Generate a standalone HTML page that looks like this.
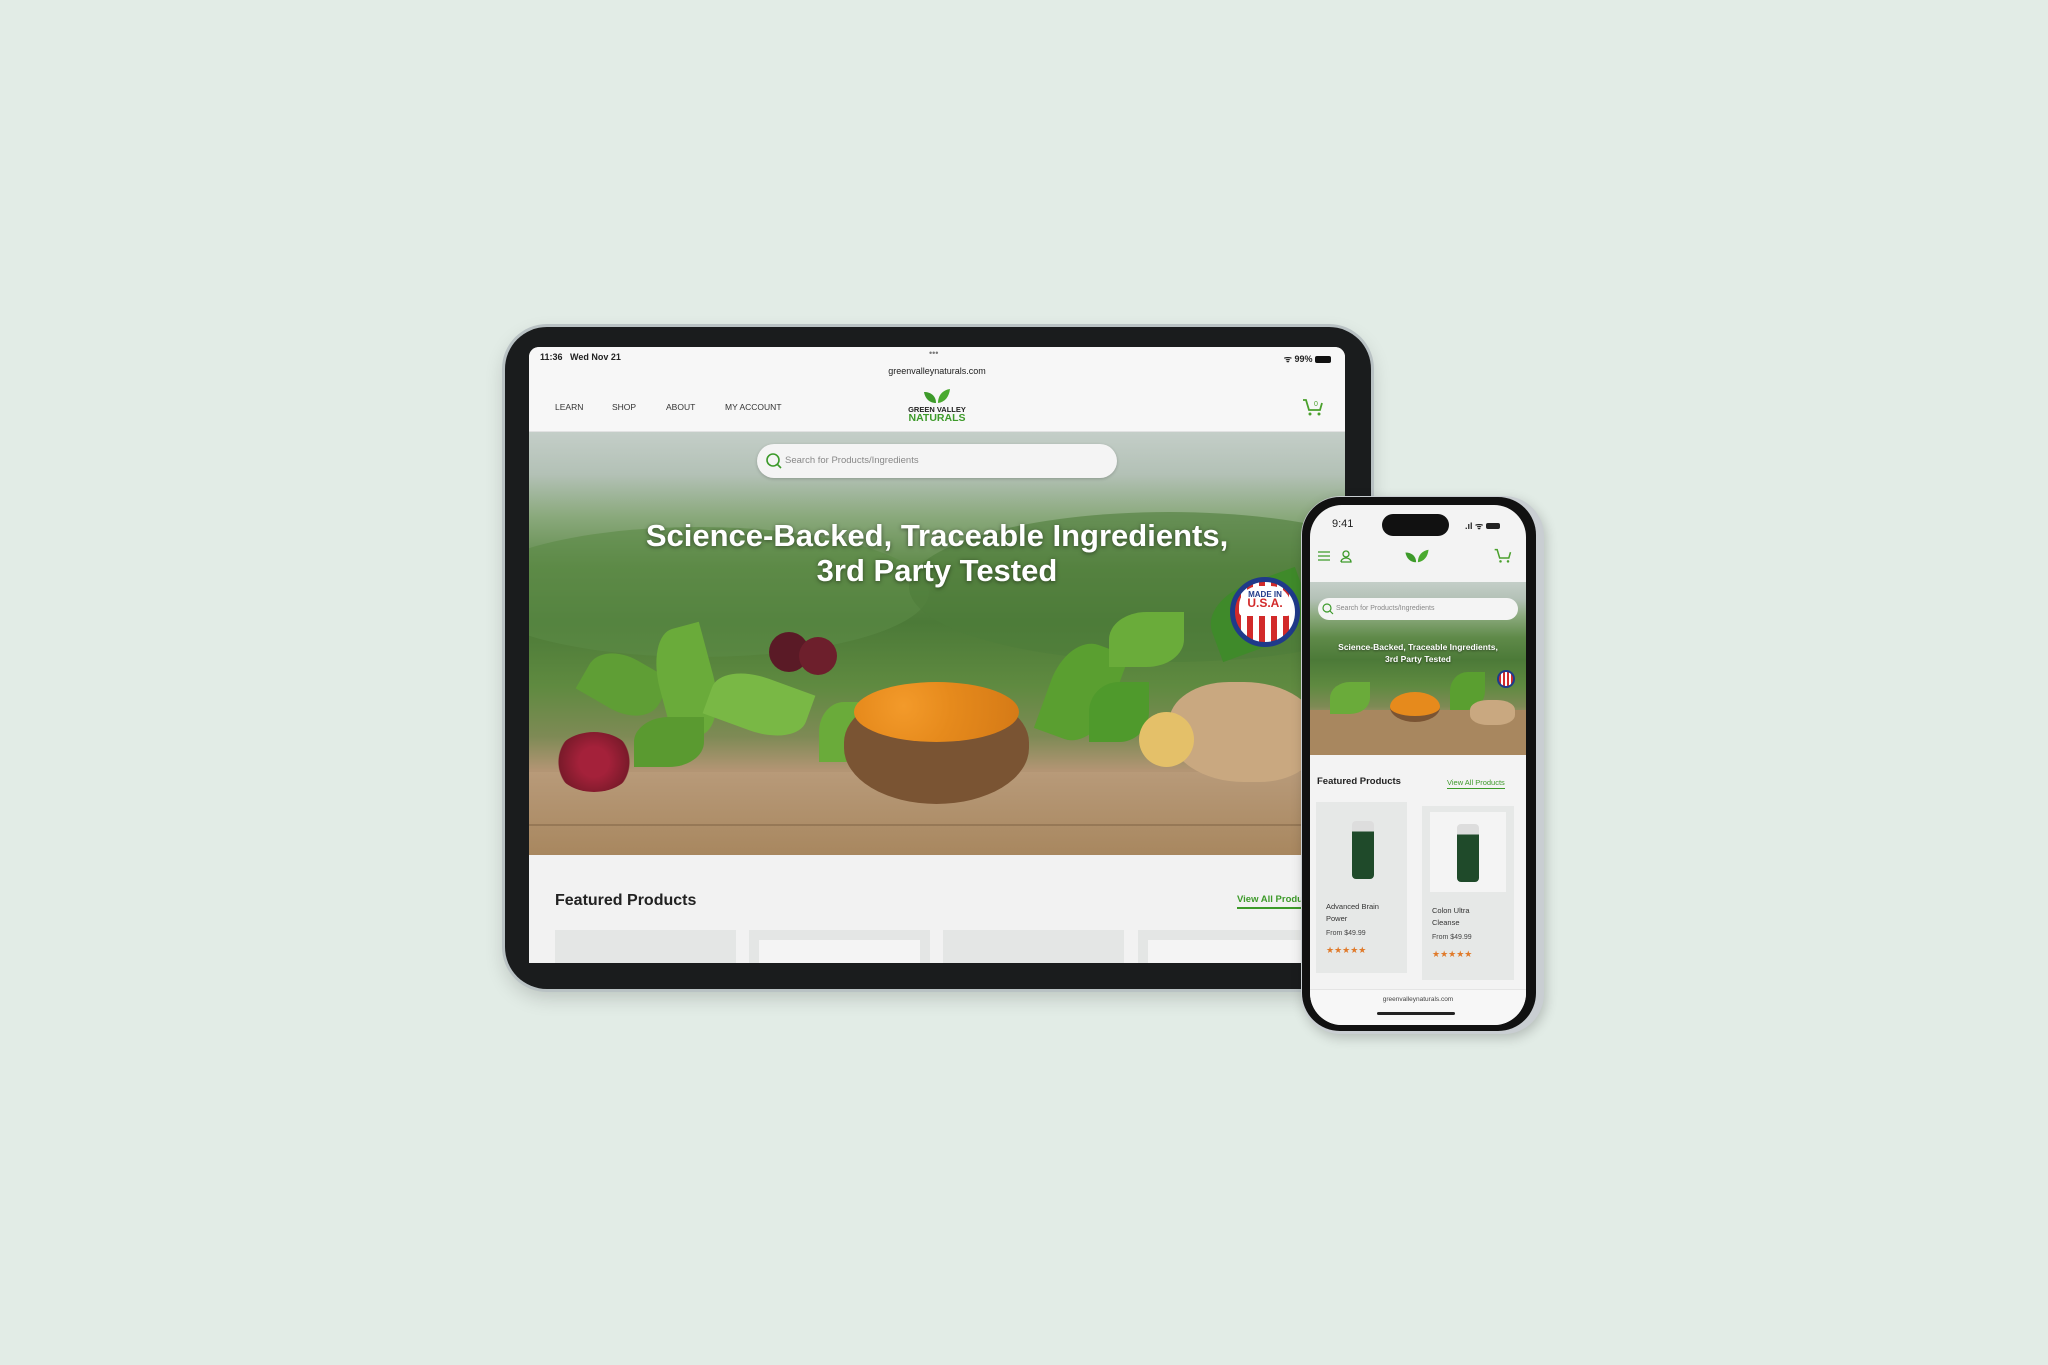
<!DOCTYPE html>
<html><head><meta charset="utf-8"><style>
*{margin:0;padding:0;box-sizing:border-box}
body{width:2048px;height:1365px;background:#e2ece6;position:relative;overflow:hidden;font-family:"Liberation Sans",sans-serif}
.a{position:absolute}
.hero{background:linear-gradient(180deg,#c4cec8 0%,#b3c1b6 10%,#8aa97c 20%,#5f8a49 32%,#4c7a38 45%,#5f8a40 60%,#7e8a55 72%,#b39574 80%,#b8977a 90%,#a4845f 100%)}
.leaf{position:absolute;border-radius:50% 0 50% 0;background:#5f9e35}
</style></head><body>
<!-- Tablet -->
<div class="a" style="left:505px;top:327px;width:866px;height:662px;border-radius:42px;background:#1a1c1d;box-shadow:0 0 0 3px #b9c2c4,0 8px 20px rgba(0,0,0,.18)"></div>
<div class="a" style="left:529px;top:347px;width:816px;height:616px;background:#f2f2f2;overflow:hidden;border-radius:10px 10px 0 0">
  <div class="a" style="left:0;top:0;width:816px;height:85px;background:#f7f7f7;border-bottom:1px solid #e2e2e2"></div>
  <div class="a" style="left:11px;top:5px;font-size:9px;font-weight:bold;color:#222">11:36&nbsp;&nbsp;&nbsp;Wed Nov 21</div>
  <div class="a" style="left:400px;top:1px;font-size:9px;color:#777">•••</div>
  <div class="a" style="right:14px;top:5px;font-size:9px;font-weight:bold;color:#222">ᯤ 99% <span style="display:inline-block;width:16px;height:7px;background:#111;border-radius:2px;vertical-align:-1px"></span></div>
  <div class="a" style="left:0;width:816px;top:19px;text-align:center;font-size:9px;color:#222">greenvalleynaturals.com</div>
  <div class="a" style="left:26px;top:55px;font-size:8.5px;color:#333">LEARN</div>
  <div class="a" style="left:83px;top:55px;font-size:8.5px;color:#333">SHOP</div>
  <div class="a" style="left:137px;top:55px;font-size:8.5px;color:#333">ABOUT</div>
  <div class="a" style="left:196px;top:55px;font-size:8.5px;color:#333">MY ACCOUNT</div>
  <svg class="a" style="left:394px;top:40px" width="28" height="18" viewBox="0 0 28 18"><path d="M13 16C6 16 2 11 1 5 8 5 13 9 13 16Z" fill="#3d9a2a"/><path d="M15 16C15 8 20 3 27 2 26 10 22 15 15 16Z" fill="#4aaa2f"/></svg>
  <div class="a" style="left:353px;top:59px;width:110px;text-align:center;font-size:7.5px;font-weight:bold;color:#222;line-height:8px">GREEN VALLEY</div>
  <div class="a" style="left:353px;top:66px;width:110px;text-align:center;font-size:10.5px;font-weight:bold;color:#3d9a2a;line-height:11px">NATURALS</div>
  <svg class="a" style="left:772px;top:50px" width="24" height="20" viewBox="0 0 24 20"><path d="M2 3h3l3 10h11l2-7" fill="none" stroke="#4aa02c" stroke-width="1.8"/><circle cx="9" cy="17" r="1.5" fill="#4aa02c"/><circle cx="18" cy="17" r="1.5" fill="#4aa02c"/><text x="13" y="9" font-size="7" fill="#4aa02c" font-family="Liberation Sans">0</text></svg>
  <div class="a hero" style="left:0;top:85px;width:816px;height:423px;overflow:hidden">
    <div class="a" style="left:-60px;top:95px;width:460px;height:130px;border-radius:50%;background:#5b8a46;opacity:.6"></div>
    <div class="a" style="left:380px;top:80px;width:520px;height:150px;border-radius:50%;background:#4f7d3a;opacity:.6"></div>
    <div class="a" style="left:0;top:340px;width:816px;height:83px;background:linear-gradient(180deg,#b89a79,#a8875f)"></div>
    <div class="a" style="left:0;top:392px;width:816px;height:2px;background:#7d6243;opacity:.5"></div>
    <div class="leaf" style="left:55px;top:225px;width:80px;height:55px;transform:rotate(30deg)"></div>
    <div class="leaf" style="left:130px;top:195px;width:55px;height:110px;transform:rotate(-15deg);background:#6aab3a"></div>
    <div class="leaf" style="left:180px;top:245px;width:100px;height:55px;transform:rotate(20deg);background:#79b845"></div>
    <div class="leaf" style="left:105px;top:285px;width:70px;height:50px;background:#5a9a30"></div>
    <div class="leaf" style="left:290px;top:270px;width:50px;height:60px;background:#6aab3a"></div>
    <div class="a" style="left:240px;top:200px;width:40px;height:40px;border-radius:50%;background:#5a1a26"></div>
    <div class="a" style="left:270px;top:205px;width:38px;height:38px;border-radius:50%;background:#6d1f2c"></div>
    <div class="a" style="left:25px;top:300px;width:80px;height:60px;border-radius:50%;background:radial-gradient(circle,#a4213a 30%,#7a1a2a 70%,transparent 72%)"></div>
    <div class="a" style="left:315px;top:260px;width:185px;height:112px;border-radius:45% 45% 50% 50%;background:#7a5433"></div>
    <div class="a" style="left:325px;top:250px;width:165px;height:60px;border-radius:50%;background:radial-gradient(circle at 30% 40%,#f39a2a 0,#e68a1c 40%,#d47916 100%)"></div>
    <div class="leaf" style="left:520px;top:210px;width:65px;height:100px;transform:rotate(20deg);background:#5a9f30"></div>
    <div class="leaf" style="left:580px;top:180px;width:75px;height:55px;background:#6aac3a"></div>
    <div class="leaf" style="left:560px;top:250px;width:60px;height:60px;background:#4f9a2c"></div>
    <div class="leaf" style="left:680px;top:150px;width:100px;height:65px;transform:rotate(-20deg);background:#3f8a2a"></div>
    <div class="a" style="left:640px;top:250px;width:150px;height:100px;border-radius:40% 50% 40% 50%;background:#c9a880"></div>
    <div class="a" style="left:610px;top:280px;width:55px;height:55px;border-radius:50%;background:#e4c069"></div>
    <div class="a" style="left:0;top:86px;width:816px;text-align:center;font-size:31px;font-weight:bold;color:#fff;line-height:35px;text-shadow:0 1px 4px rgba(0,0,0,.5)">Science-Backed, Traceable Ingredients,<br>3rd Party Tested</div>
    <div class="a" style="left:228px;top:12px;width:360px;height:34px;border-radius:17px;background:#f4f4f4;box-shadow:0 1px 3px rgba(0,0,0,.2)"></div>
    <svg class="a" style="left:236px;top:20px" width="18" height="18"><circle cx="8" cy="8" r="6" fill="none" stroke="#3c9a2a" stroke-width="1.6"/><path d="M12 12l4 4" stroke="#3c9a2a" stroke-width="1.6"/></svg>
    <div class="a" style="left:256px;top:23px;font-size:9.5px;color:#888">Search for Products/Ingredients</div>
    <div class="a" style="left:701px;top:145px;width:70px;height:70px;border-radius:50%;background:repeating-linear-gradient(90deg,#d22a2a 0 6px,#fff 6px 12px);border:5px solid #1f3a8a"></div>
    <div class="a" style="left:710px;top:154px;width:52px;height:30px;background:#fff;border-radius:20px 20px 4px 4px;text-align:center;font-size:8px;font-weight:bold;color:#1f3a8a;line-height:9px;padding-top:4px">MADE IN<br><span style="color:#d22a2a;font-size:12px">U.S.A.</span></div>
  </div>
  <div class="a" style="left:26px;top:545px;font-size:16px;font-weight:bold;color:#222">Featured Products</div>
  <div class="a" style="left:708px;top:547px;font-size:9.5px;font-weight:bold;color:#3d9a2a;border-bottom:2px solid #3d9a2a;padding-bottom:2px">View All Products</div>
  <div class="a" style="left:26px;top:583px;width:181px;height:40px;background:#e4e6e5"></div>
  <div class="a" style="left:220px;top:583px;width:181px;height:40px;background:#e4e6e5"><div style="margin:10px 10px 0;height:40px;background:#f4f4f4"></div></div>
  <div class="a" style="left:414px;top:583px;width:181px;height:40px;background:#e4e6e5"></div>
  <div class="a" style="left:609px;top:583px;width:181px;height:40px;background:#e4e6e5"><div style="margin:10px 10px 0;height:40px;background:#f4f4f4"></div></div>
</div>
<!-- Phone -->
<div class="a" style="left:1301px;top:496px;width:243px;height:538px;border-radius:40px;background:#c9ced2;box-shadow:2px 4px 12px rgba(0,0,0,.2)"></div>
<div class="a" style="left:1302px;top:497px;width:234px;height:534px;border-radius:38px;background:#111"></div>
<div class="a" style="left:1310px;top:505px;width:216px;height:520px;border-radius:32px;background:#f3f3f3;overflow:hidden">
  <div class="a" style="left:22px;top:13px;font-size:11px;color:#222">9:41</div>
  <div class="a" style="left:72px;top:9px;width:67px;height:22px;border-radius:11px;background:#111"></div>
  <div class="a" style="left:155px;top:14px;font-size:9px;color:#222;font-weight:bold">.ıl ᯤ <span style="display:inline-block;width:14px;height:6px;background:#222;border-radius:2px"></span></div>
  <svg class="a" style="left:7px;top:45px" width="14" height="12"><path d="M1 2h12M1 6h12M1 10h12" stroke="#3d9a2a" stroke-width="1.3"/></svg>
  <svg class="a" style="left:29px;top:44px" width="14" height="14"><circle cx="7" cy="5" r="3" fill="none" stroke="#3d9a2a" stroke-width="1.3"/><path d="M2 13h10a5 4 0 0 0-10 0" fill="none" stroke="#3d9a2a" stroke-width="1.3"/></svg>
  <svg class="a" style="left:94px;top:43px" width="26" height="16" viewBox="0 0 28 18"><path d="M13 16C6 16 2 11 1 5 8 5 13 9 13 16Z" fill="#3d9a2a"/><path d="M15 16C15 8 20 3 27 2 26 10 22 15 15 16Z" fill="#4aaa2f"/></svg>
  <svg class="a" style="left:183px;top:42px" width="20" height="17" viewBox="0 0 24 20"><path d="M2 3h3l3 10h11l2-7" fill="none" stroke="#4aa02c" stroke-width="1.8"/><circle cx="9" cy="17" r="1.5" fill="#4aa02c"/><circle cx="18" cy="17" r="1.5" fill="#4aa02c"/></svg>
  <div class="a hero" style="left:0;top:77px;width:216px;height:173px;overflow:hidden">
    <div class="a" style="left:0;top:128px;width:216px;height:45px;background:#a8875f"></div>
    <div class="leaf" style="left:20px;top:100px;width:40px;height:32px;background:#6aab3a"></div>
    <div class="a" style="left:80px;top:110px;width:50px;height:30px;border-radius:50%;background:#e68a1c;border-bottom:6px solid #7a5433"></div>
    <div class="leaf" style="left:140px;top:90px;width:35px;height:38px;background:#5a9f30"></div>
    <div class="a" style="left:160px;top:118px;width:45px;height:25px;border-radius:40%;background:#c9a880"></div>
    <div class="a" style="left:8px;top:16px;width:200px;height:22px;border-radius:11px;background:#f4f4f4"></div>
    <svg class="a" style="left:12px;top:21px" width="12" height="12"><circle cx="5" cy="5" r="4" fill="none" stroke="#3c9a2a" stroke-width="1.2"/><path d="M8 8l3 3" stroke="#3c9a2a" stroke-width="1.2"/></svg>
    <div class="a" style="left:26px;top:23px;font-size:7px;color:#888">Search for Products/Ingredients</div>
    <div class="a" style="left:0;top:59px;width:216px;text-align:center;font-size:8.5px;font-weight:bold;color:#fff;line-height:12px;text-shadow:0 1px 2px rgba(0,0,0,.5)">Science-Backed, Traceable Ingredients,<br>3rd Party Tested</div>
    <div class="a" style="left:187px;top:88px;width:18px;height:18px;border-radius:50%;background:repeating-linear-gradient(90deg,#d22a2a 0 2px,#fff 2px 4px);border:2px solid #1f3a8a"></div>
  </div>
  <div class="a" style="left:7px;top:271px;font-size:9.5px;font-weight:bold;color:#222">Featured Products</div>
  <div class="a" style="left:137px;top:273px;font-size:7.5px;color:#3d9a2a;border-bottom:1px solid #3d9a2a;padding-bottom:1px">View All Products</div>
  <div class="a" style="left:6px;top:297px;width:91px;height:171px;background:#e6e8e7"></div>
  <div class="a" style="left:112px;top:301px;width:92px;height:174px;background:#e6e8e7"></div>
  <div class="a" style="left:120px;top:307px;width:76px;height:80px;background:#f4f4f4"></div>
  <div class="a" style="left:42px;top:316px;width:22px;height:58px;border-radius:4px;background:linear-gradient(180deg,#ddd 0 18%,#1f4a2a 18%)"></div>
  <div class="a" style="left:147px;top:319px;width:22px;height:58px;border-radius:4px;background:linear-gradient(180deg,#ddd 0 18%,#1f4a2a 18%)"></div>
  <div class="a" style="left:16px;top:396px;font-size:7.5px;color:#333;line-height:12px">Advanced Brain<br>Power</div>
  <div class="a" style="left:16px;top:425px;font-size:7px;color:#444">From $49.99</div>
  <div class="a" style="left:16px;top:440px;font-size:9px;color:#e07a2a">★★★★★</div>
  <div class="a" style="left:122px;top:400px;font-size:7.5px;color:#333;line-height:12px">Colon Ultra<br>Cleanse</div>
  <div class="a" style="left:122px;top:429px;font-size:7px;color:#444">From $49.99</div>
  <div class="a" style="left:122px;top:444px;font-size:9px;color:#e07a2a">★★★★★</div>
  <div class="a" style="left:0;top:484px;width:216px;height:36px;background:#f7f7f7;border-top:1px solid #e4e4e4"></div>
  <div class="a" style="left:0;top:491px;width:216px;text-align:center;font-size:6.5px;color:#444">greenvalleynaturals.com</div>
  <div class="a" style="left:67px;top:507px;width:78px;height:3px;border-radius:2px;background:#222"></div>
</div>
</body></html>
